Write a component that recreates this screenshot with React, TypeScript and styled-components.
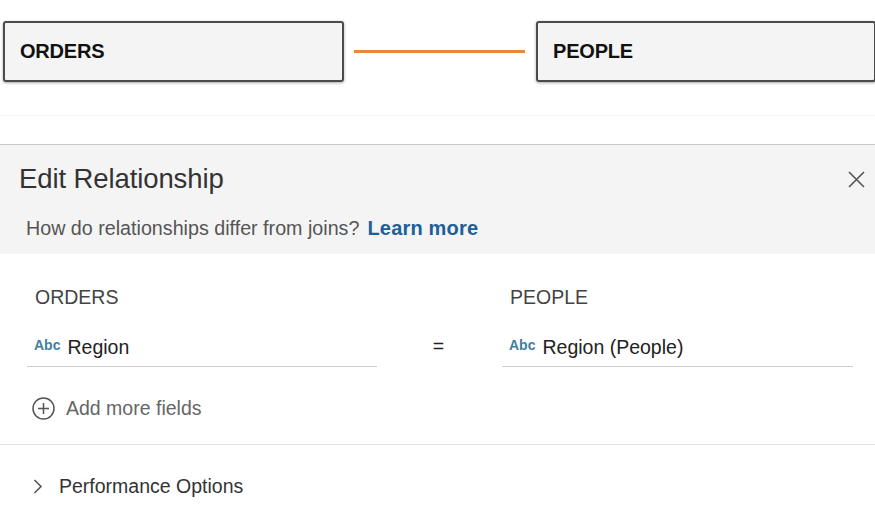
import React from "react";
import styled, { createGlobalStyle } from "styled-components";

const Global = createGlobalStyle`
  html, body { margin: 0; padding: 0; background: #ffffff; }
  body { font-family: "Liberation Sans", Arial, sans-serif; color: #333; }
  * { box-sizing: border-box; }
`;

const Page = styled.div`
  width: 875px;
  height: 525px;
  overflow: hidden;
  display: flex;
  flex-direction: column;
`;

const Canvas = styled.div`
  height: 144px;
  display: flex;
  flex-direction: column;
`;

const NodeRow = styled.div`
  display: flex;
  align-items: center;
  padding: 21px 0 0 3px;
  width: 880px;
`;

const Node = styled.div<{ $w: number }>`
  width: ${(p) => p.$w}px;
  height: 61px;
  flex: none;
  background: #f4f4f4;
  border: 2px solid #4b4b4b;
  border-radius: 3px;
  box-shadow: 0 1px 3px rgba(0, 0, 0, 0.35);
  display: flex;
  align-items: center;
  padding-left: 15px;
  font-weight: bold;
  font-size: 20px;
  color: #111;
  letter-spacing: -0.2px;
`;

const Link = styled.div`
  flex: none;
  width: 171px;
  height: 3px;
  margin: 0 11px 0 10px;
  background: #ee8633;
`;

const FaintRule = styled.div`
  margin-top: 33px;
  height: 1px;
  background: #f6f6f6;
`;

const Panel = styled.div`
  border-top: 1px solid #c9c9c9;
  flex: 1;
  display: flex;
  flex-direction: column;
`;

const Header = styled.div`
  background: #f4f4f4;
  padding: 19px 0 14px;
  display: flex;
  flex-direction: column;
`;

const TitleRow = styled.div`
  display: flex;
  align-items: center;
  justify-content: space-between;
  padding: 0 10px 0 19px;
  height: 30px;
`;

const Title = styled.div`
  font-size: 27.5px;
  line-height: 30px;
  color: #333;
  letter-spacing: -0.1px;
`;

const CloseButton = styled.button`
  border: none;
  background: none;
  padding: 0;
  width: 18px;
  height: 18px;
  display: flex;
  align-items: center;
  justify-content: center;
  cursor: pointer;
`;

const Subtitle = styled.div`
  margin: 22px 0 0 26px;
  font-size: 19.7px;
  line-height: 24px;
  color: #555;
`;

const LearnMore = styled.a`
  color: #1d5f9b;
  font-weight: bold;
  font-size: 20px;
  text-decoration: none;
  margin-left: 8px;
  letter-spacing: 0.2px;
`;

const Body = styled.div`
  padding: 31px 0 0 27px;
  display: grid;
  grid-template-columns: 350px 125px 351px;
  align-items: end;
`;

const ColLabel = styled.div`
  font-size: 19.5px;
  line-height: 24px;
  color: #444;
  padding-left: 8px;
`;

const Field = styled.div`
  margin-top: 26px;
  display: flex;
  align-items: center;
  padding: 0 0 7px 7px;
  height: 32px;
  border-bottom: 1px solid #cfcfcf;
  font-size: 19.5px;
  line-height: 24px;
  color: #222;
`;

const TypeTag = styled.span`
  font-size: 14px;
  font-weight: bold;
  color: #3f7fa0;
  margin-right: 7px;
  position: relative;
  top: -2px;
`;

const Equals = styled.div`
  font-size: 19.5px;
  line-height: 24px;
  text-align: center;
  padding: 0 2px 9px 0;
  color: #222;
`;

const AddRow = styled.div`
  display: flex;
  align-items: center;
  gap: 11px;
  margin: 29px 0 0 32px;
  font-size: 19.5px;
  line-height: 24px;
  color: #666;
`;

const Divider = styled.div`
  margin-top: 24px;
  height: 1px;
  background: #e3e3e3;
`;

const Expander = styled.div`
  display: flex;
  align-items: center;
  gap: 16px;
  padding: 29px 0 0 33px;
  font-size: 19.5px;
  line-height: 24px;
  color: #333;
`;

export default function App() {
  return (
    <Page>
      <Global />
      <Canvas>
        <NodeRow>
          <Node $w={341}>ORDERS</Node>
          <Link />
          <Node $w={340}>PEOPLE</Node>
        </NodeRow>
        <FaintRule />
      </Canvas>
      <Panel>
        <Header>
          <TitleRow>
            <Title>Edit Relationship</Title>
            <CloseButton aria-label="Close">
              <svg width="17" height="17" viewBox="0 0 17 17">
                <path d="M1 1 L16 16 M16 1 L1 16" stroke="#555" strokeWidth="1.6" fill="none" />
              </svg>
            </CloseButton>
          </TitleRow>
          <Subtitle>
            How do relationships differ from joins?
            <LearnMore href="#">Learn more</LearnMore>
          </Subtitle>
        </Header>
        <Body>
          <ColLabel>ORDERS</ColLabel>
          <div />
          <ColLabel>PEOPLE</ColLabel>
          <Field>
            <TypeTag>Abc</TypeTag>Region
          </Field>
          <Equals>=</Equals>
          <Field>
            <TypeTag>Abc</TypeTag>Region (People)
          </Field>
        </Body>
        <AddRow>
          <svg width="23" height="23" viewBox="0 0 23 23">
            <circle cx="11.5" cy="11.5" r="10.5" stroke="#555" strokeWidth="1.5" fill="none" />
            <path d="M11.5 6 V17 M6 11.5 H17" stroke="#555" strokeWidth="1.5" />
          </svg>
          Add more fields
        </AddRow>
        <Divider />
        <Expander>
          <svg width="10" height="15" viewBox="0 0 10 15">
            <path d="M1.5 1 L8 7.5 L1.5 14" stroke="#555" strokeWidth="1.6" fill="none" />
          </svg>
          Performance Options
        </Expander>
      </Panel>
    </Page>
  );
}
